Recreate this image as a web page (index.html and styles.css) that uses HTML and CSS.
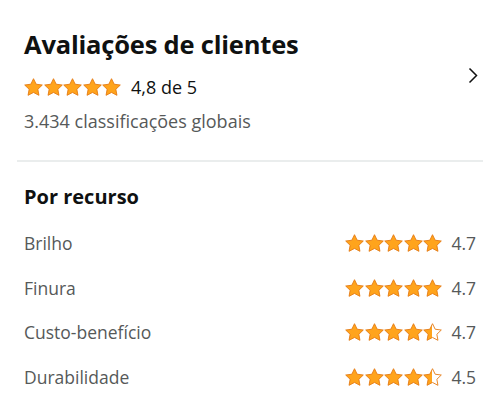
FILE: index.html
```html
<!DOCTYPE html>
<html lang="pt">
<head>
<meta charset="utf-8">
<link rel="stylesheet" href="styles.css">
</head>
<body>
<svg width="0" height="0" class="defs">
  <defs>
    <symbol id="star" viewBox="0.4 0.4 19.2 18">
      <path d="M10 1l2.7 5.6 6.2.8-4.5 4.3 1.1 6.1L10 14.9l-5.5 2.9 1.1-6.1-4.5-4.3 6.2-.8z" fill="#FFA41C" stroke="#E47911" stroke-width="0.9" stroke-linejoin="round"/>
    </symbol>
    <linearGradient id="half">
      <stop offset="50%" stop-color="#FFA41C"/>
      <stop offset="50%" stop-color="#fff"/>
    </linearGradient>
    <symbol id="star-half" viewBox="0.4 0.4 19.2 18">
      <path d="M10 1l2.7 5.6 6.2.8-4.5 4.3 1.1 6.1L10 14.9l-5.5 2.9 1.1-6.1-4.5-4.3 6.2-.8z" fill="url(#half)" stroke="#E47911" stroke-width="0.9" stroke-linejoin="round"/>
    </symbol>
  </defs>
</svg>
<main class="card">
  <section class="summary">
    <div class="summary-text">
      <h1 class="title">Avaliações de clientes</h1>
      <div class="rating-line">
        <span class="stars stars-lg">
          <svg><use href="#star"/></svg><svg><use href="#star"/></svg><svg><use href="#star"/></svg><svg><use href="#star"/></svg><svg><use href="#star"/></svg>
        </span>
        <span class="rating-text">4,8 de 5</span>
      </div>
      <p class="global">3.434 classificações globais</p>
    </div>
    <svg class="chevron" viewBox="0 0 10 17"><path d="M1.5 1.5l7 7-7 7" fill="none" stroke="#111" stroke-width="1.5"/></svg>
  </section>
  <hr class="divider">
  <section class="features">
    <h2 class="sub">Por recurso</h2>
    <div class="rows">
      <div class="row">
        <span class="name">Brilho</span>
        <span class="stars"><svg><use href="#star"/></svg><svg><use href="#star"/></svg><svg><use href="#star"/></svg><svg><use href="#star"/></svg><svg><use href="#star"/></svg></span>
        <span class="val">4.7</span>
      </div>
      <div class="row">
        <span class="name">Finura</span>
        <span class="stars"><svg><use href="#star"/></svg><svg><use href="#star"/></svg><svg><use href="#star"/></svg><svg><use href="#star"/></svg><svg><use href="#star"/></svg></span>
        <span class="val">4.7</span>
      </div>
      <div class="row">
        <span class="name">Custo-benefício</span>
        <span class="stars"><svg><use href="#star"/></svg><svg><use href="#star"/></svg><svg><use href="#star"/></svg><svg><use href="#star"/></svg><svg><use href="#star-half"/></svg></span>
        <span class="val">4.7</span>
      </div>
      <div class="row">
        <span class="name">Durabilidade</span>
        <span class="stars"><svg><use href="#star"/></svg><svg><use href="#star"/></svg><svg><use href="#star"/></svg><svg><use href="#star"/></svg><svg><use href="#star-half"/></svg></span>
        <span class="val">4.5</span>
      </div>
    </div>
  </section>
</main>
</body>
</html>
```
FILE: styles.css
```css
* { box-sizing: border-box; }
html, body { margin: 0; padding: 0; background: #fff; }
body {
  font-family: "Open Sans", "Noto Sans", "Liberation Sans", sans-serif;
  color: #0F1111;
  width: 500px;
  height: 409px;
  overflow: hidden;
}
.defs { position: absolute; }
.card { padding: 26px 17px 0 17px; }
.summary {
  display: flex;
  align-items: flex-start;
  padding: 0 5px 0 7px;
}
.summary-text { flex: 1; }
.title {
  margin: 0;
  font-size: 25.5px;
  font-weight: 700;
  line-height: 36px;
  letter-spacing: -0.2px;
}
.rating-line {
  display: flex;
  align-items: center;
  margin-top: 12px;
  height: 26px;
}
.stars { display: inline-flex; gap: 0.5px; }
.stars svg { width: 19px; height: 18px; }
.rating-text { margin-left: 10px; font-size: 18px; }
.global {
  margin: 9px 0 0;
  font-size: 18px;
  line-height: 24px;
  color: #565959;
}
.chevron { width: 10px; height: 17px; margin-top: 41px; }
.divider {
  border: 0;
  height: 2px;
  background: #eaeded;
  margin: 27px 0 0;
}
.features { padding: 0 7px; }
.sub {
  margin: 21px 0 0;
  font-size: 20px;
  font-weight: 700;
  line-height: 28px;
}
.rows { margin-top: 10px; }
.row {
  display: flex;
  align-items: center;
  height: 44.5px;
}
.name { flex: 1; font-size: 17.5px; color: #565959; }
.val { text-align: right; font-size: 17.5px; color: #565959; margin-left: 9px; }
```
